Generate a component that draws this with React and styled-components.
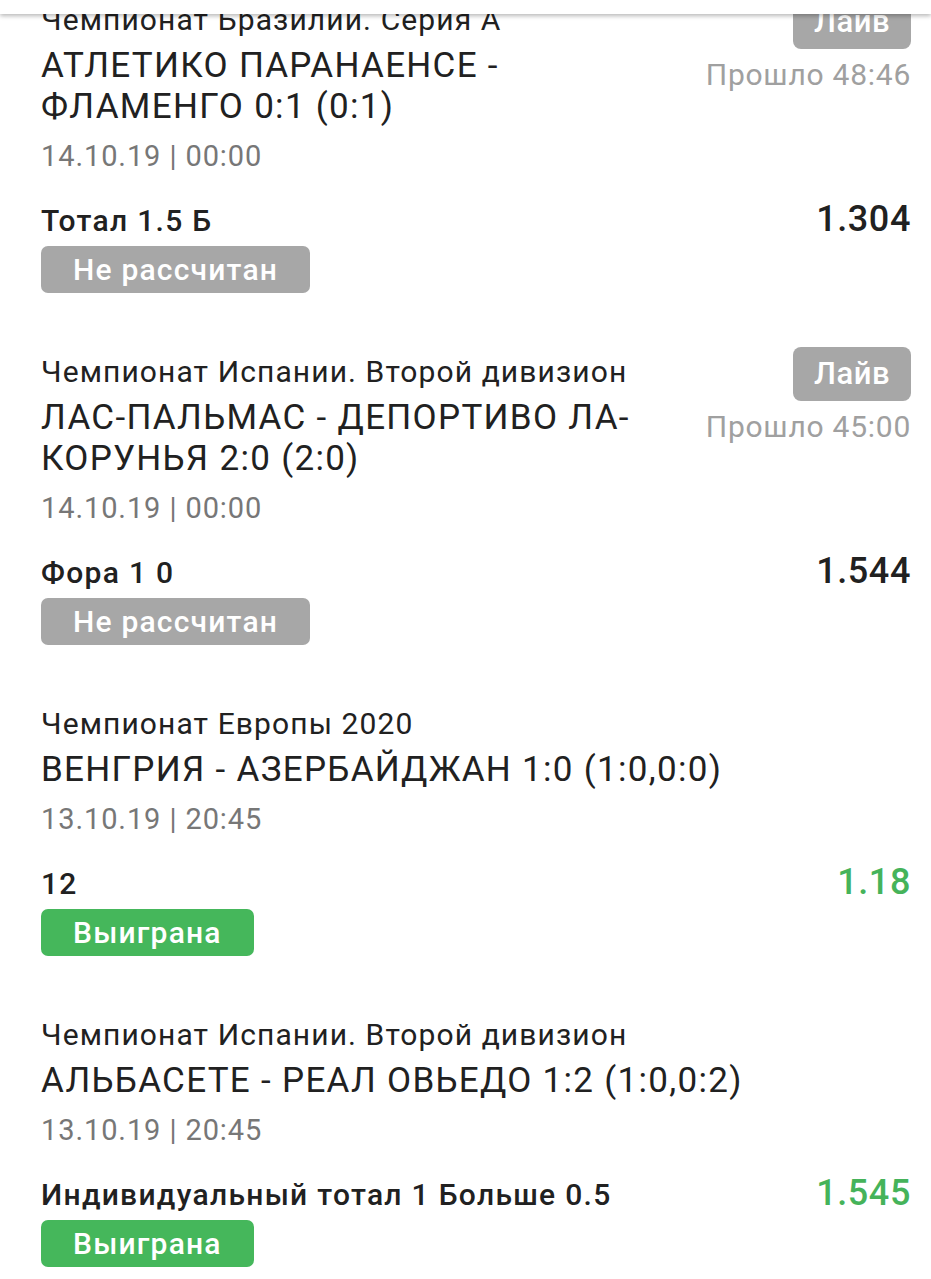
import React from "react";
import styled, { createGlobalStyle } from "styled-components";

const GlobalStyle = createGlobalStyle`
  html, body {
    margin: 0;
    padding: 0;
    background: #ffffff;
    overflow: hidden;
  }
  body {
    font-family: Roboto, "Noto Sans", "Liberation Sans", sans-serif;
    color: #212121;
  }
`;

const TopBar = styled.div`
  position: fixed;
  top: 0;
  left: 0;
  right: 0;
  height: 14px;
  background: #ffffff;
  box-shadow: 0 2px 4px rgba(0, 0, 0, 0.28);
  z-index: 10;
`;

const List = styled.div`
  margin-top: -28px;
  display: flex;
  flex-direction: column;
`;

const Item = styled.div`
  padding: 23px 20px 31px 41px;
  display: flex;
  flex-direction: column;
`;

const Head = styled.div`
  display: flex;
  align-items: flex-start;
  gap: 30px;
`;

const Info = styled.div`
  flex: 1;
  min-width: 0;
  display: flex;
  flex-direction: column;
`;

const League = styled.div`
  margin-top: 7px;
  font-size: 30px;
  line-height: 36px;
  letter-spacing: 1.1px;
  color: #212121;
`;

const Match = styled.div`
  margin-top: 7px;
  font-size: 35px;
  line-height: 41px;
  letter-spacing: 1.3px;
  color: #212121;
`;

const DateLine = styled.div`
  margin-top: 11px;
  font-size: 29px;
  line-height: 36px;
  letter-spacing: 0.9px;
  color: #777777;
`;

const Live = styled.div`
  display: flex;
  flex-direction: column;
  align-items: flex-end;
  flex-shrink: 0;
`;

const LiveBadge = styled.div`
  height: 54px;
  line-height: 54px;
  padding: 0 21px;
  border-radius: 8px;
  background: #a7a7a7;
  color: #ffffff;
  font-size: 31px;
  font-weight: 500;
  letter-spacing: 0.5px;
`;

const Elapsed = styled.div`
  margin-top: 8px;
  font-size: 30px;
  line-height: 36px;
  letter-spacing: 0.75px;
  color: #a0a0a0;
  white-space: nowrap;
`;

const BetRow = styled.div`
  margin-top: 27px;
  display: flex;
  align-items: baseline;
  justify-content: space-between;
`;

const BetName = styled.div`
  font-size: 30px;
  line-height: 36px;
  font-weight: 500;
  letter-spacing: 1.3px;
  color: #212121;
`;

const Odds = styled.div`
  font-size: 36px;
  line-height: 36px;
  font-weight: 500;
  letter-spacing: 0.6px;
  color: ${(p) => (p.$won ? "#45b35a" : "#212121")};
`;

const Status = styled.div`
  align-self: flex-start;
  margin-top: 7px;
  height: 47px;
  line-height: 47px;
  padding: 0 32px;
  border-radius: 7px;
  background: ${(p) => (p.$won ? "#45b75b" : "#a7a7a7")};
  color: #ffffff;
  font-size: 30px;
  font-weight: 500;
  letter-spacing: 1.2px;
`;

const bets = [
  {
    league: "Чемпионат Бразилии. Серия А",
    match: "АТЛЕТИКО ПАРАНАЕНСЕ - ФЛАМЕНГО 0:1 (0:1)",
    date: "14.10.19 | 00:00",
    live: "Прошло 48:46",
    bet: "Тотал 1.5 Б",
    odds: "1.304",
    won: false,
  },
  {
    league: "Чемпионат Испании. Второй дивизион",
    match: "ЛАС-ПАЛЬМАС - ДЕПОРТИВО ЛА-КОРУНЬЯ 2:0 (2:0)",
    date: "14.10.19 | 00:00",
    live: "Прошло 45:00",
    bet: "Фора 1 0",
    odds: "1.544",
    won: false,
  },
  {
    league: "Чемпионат Европы 2020",
    match: "ВЕНГРИЯ - АЗЕРБАЙДЖАН 1:0 (1:0,0:0)",
    date: "13.10.19 | 20:45",
    bet: "12",
    odds: "1.18",
    won: true,
  },
  {
    league: "Чемпионат Испании. Второй дивизион",
    match: "АЛЬБАСЕТЕ - РЕАЛ ОВЬЕДО 1:2 (1:0,0:2)",
    date: "13.10.19 | 20:45",
    bet: "Индивидуальный тотал 1 Больше 0.5",
    odds: "1.545",
    won: true,
  },
];

export default function App() {
  return (
    <>
      <GlobalStyle />
      <TopBar />
      <List>
        {bets.map((b, i) => (
          <Item key={i}>
            <Head>
              <Info>
                <League>{b.league}</League>
                <Match>{b.match}</Match>
                <DateLine>{b.date}</DateLine>
              </Info>
              {b.live && (
                <Live>
                  <LiveBadge>Лайв</LiveBadge>
                  <Elapsed>{b.live}</Elapsed>
                </Live>
              )}
            </Head>
            <BetRow>
              <BetName>{b.bet}</BetName>
              <Odds $won={b.won}>{b.odds}</Odds>
            </BetRow>
            <Status $won={b.won}>{b.won ? "Выиграна" : "Не рассчитан"}</Status>
          </Item>
        ))}
      </List>
    </>
  );
}
